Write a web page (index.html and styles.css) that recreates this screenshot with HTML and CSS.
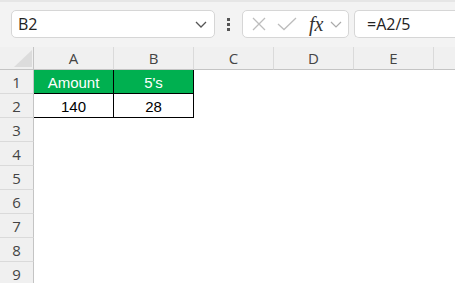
FILE: index.html
```html
<!DOCTYPE html>
<html>
<head lang="en">
	<meta charset="UTF-8">
	<title>B2 =A2/5</title>
	<link rel="stylesheet" href="styles.css">
</head>
<body>
<div class="toolbar">
	<div class="name_box">
		<span>B2</span>
		<svg class="chev" width="12" height="7" viewBox="0 0 12 7"><path d="M1 1 L6 6 L11 1" fill="none" stroke="#555" stroke-width="1.3"/></svg>
	</div>
	<div class="dots"><i></i><i></i><i></i></div>
	<div class="fn_box">
		<svg width="14" height="14" viewBox="0 0 14 14"><path d="M1 1 L13 13 M13 1 L1 13" fill="none" stroke="#bdbdbd" stroke-width="1.3"/></svg>
		<svg width="20" height="14" viewBox="0 0 20 14"><path d="M1 7 L7 12.5 L19 1" fill="none" stroke="#bdbdbd" stroke-width="1.3"/></svg>
		<span class="fx">fx</span>
		<svg width="12" height="7" viewBox="0 0 12 7"><path d="M1 1 L6 6 L11 1" fill="none" stroke="#aaa" stroke-width="1.2"/></svg>
	</div>
	<div class="formula_box">=A2/5</div>
</div>
<div class="sheet">
	<div class="corner"><svg width="18" height="17" viewBox="0 0 18 17"><path d="M0 17 L18 0 L18 17 Z" fill="#dcdcdc"/></svg></div>
	<div class="col_head">A</div>
	<div class="col_head">B</div>
	<div class="col_head">C</div>
	<div class="col_head">D</div>
	<div class="col_head">E</div>
	<div class="col_head last"></div>

	<div class="row_head">1</div>
	<div class="cell green boxed">Amount</div>
	<div class="cell green boxed">5's</div>
	<div class="cell"></div><div class="cell"></div><div class="cell"></div><div class="cell"></div>

	<div class="row_head">2</div>
	<div class="cell boxed">140</div>
	<div class="cell boxed">28</div>
	<div class="cell"></div><div class="cell"></div><div class="cell"></div><div class="cell"></div>

	<div class="row_head">3</div><div class="cell"></div><div class="cell"></div><div class="cell"></div><div class="cell"></div><div class="cell"></div><div class="cell"></div>
	<div class="row_head">4</div><div class="cell"></div><div class="cell"></div><div class="cell"></div><div class="cell"></div><div class="cell"></div><div class="cell"></div>
	<div class="row_head">5</div><div class="cell"></div><div class="cell"></div><div class="cell"></div><div class="cell"></div><div class="cell"></div><div class="cell"></div>
	<div class="row_head">6</div><div class="cell"></div><div class="cell"></div><div class="cell"></div><div class="cell"></div><div class="cell"></div><div class="cell"></div>
	<div class="row_head">7</div><div class="cell"></div><div class="cell"></div><div class="cell"></div><div class="cell"></div><div class="cell"></div><div class="cell"></div>
	<div class="row_head">8</div><div class="cell"></div><div class="cell"></div><div class="cell"></div><div class="cell"></div><div class="cell"></div><div class="cell"></div>
	<div class="row_head">9</div><div class="cell"></div><div class="cell"></div><div class="cell"></div><div class="cell"></div><div class="cell"></div><div class="cell"></div>
</div>
</body></html>
```

FILE: styles.css
```css
*{
	margin:0;
	padding:0;
	box-sizing:border-box;
}
body{
	background:#fff;
	overflow:hidden;
	font-family:"Open Sans","Noto Sans",sans-serif;
	color:#333;
}
.toolbar{
	height:47px;
	background:#f3f3f3;
	border-top:2px solid #e6e6e6;
	display:flex;
	align-items:flex-start;
	padding-top:8px;
	white-space:nowrap;
}
.toolbar > *{
	flex-shrink:0;
}
.name_box, .fn_box, .formula_box{
	height:28px;
	background:#fff;
	border:1px solid #d6d6d6;
	border-radius:5px;
	display:flex;
	align-items:center;
}
.name_box{
	margin-left:11px;
	width:204px;
	padding:0 7px 0 6px;
	justify-content:space-between;
	font-size:16px;
	color:#222;
}
.dots{
	width:27px;
	height:28px;
	display:flex;
	flex-direction:column;
	align-items:center;
	justify-content:center;
	gap:2px;
}
.dots i{
	width:3px;
	height:3px;
	background:#555;
}
.fn_box{
	width:107px;
	padding:0 4px 0 9px;
	gap:11px;
}
.fn_box .fx{
	font-family:"Liberation Serif","DejaVu Serif",serif;
	font-style:italic;
	font-size:20px;
	color:#333;
	margin-left:1px;
	margin-right:-4px;
	line-height:20px;
}
.formula_box{
	flex:1 1 auto;
	min-width:0;
	margin-left:5px;
	padding-left:12px;
	font-size:16px;
	color:#222;
	border-right:none;
	border-top-right-radius:0;
	border-bottom-right-radius:0;
}
.sheet{
	display:grid;
	grid-template-columns:34px 80px 80px 80px 80px 80px 1fr;
	grid-template-rows:23px repeat(9,24px);
}
.corner, .col_head{
	background:#f0f0f0;
	border-bottom:1px solid #c4c4c4;
}
.corner{
	border-right:1px solid #c4c4c4;
	display:flex;
	align-items:flex-end;
	justify-content:flex-end;
	padding:0 1px 2px 0;
}
.corner svg{
	display:block;
}
.col_head{
	border-right:1px solid #dadada;
	text-align:center;
	font-size:15px;
	line-height:22px;
	color:#444;
}
.col_head.last{
	border-right:none;
}
.row_head{
	background:#f0f0f0;
	border-right:1px solid #c4c4c4;
	border-bottom:1px solid #dadada;
	text-align:center;
	font-size:15px;
	line-height:23px;
	padding-top:1px;
	color:#444;
}
.cell{
	font-family:"Liberation Sans",Arial,sans-serif;
	font-size:15px;
	line-height:22px;
	padding-top:2px;
	text-align:center;
	color:#000;
}
.boxed{
	border-right:1px solid #000;
	border-bottom:1px solid #000;
}
.green{
	background:#00b050;
	color:#fff;
}
```
